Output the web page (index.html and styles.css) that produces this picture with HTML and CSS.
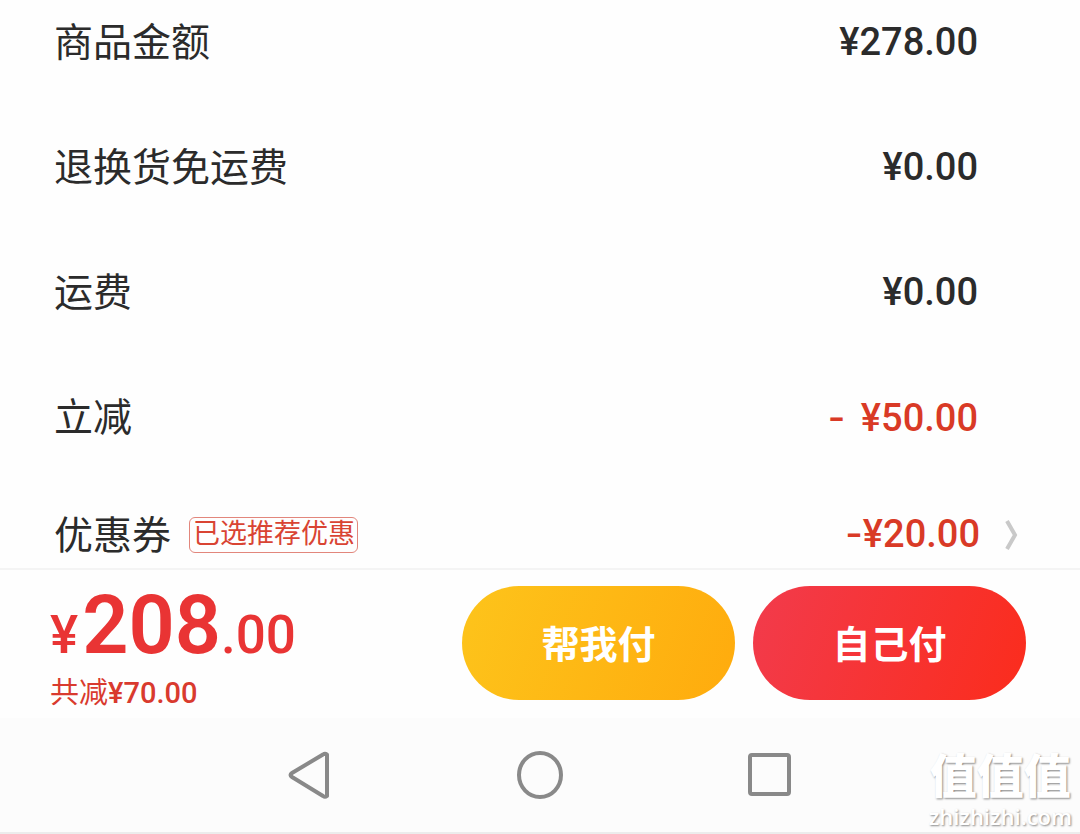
FILE: index.html
```
<!DOCTYPE html>
<html lang="zh-CN">
<head>
    <meta charset="UTF-8">
    <meta name="viewport" content="width=device-width, initial-scale=1.0">
    <title>确认订单</title>
    <link rel="stylesheet" href="styles.css">
</head>
<body>
    <main class="summary">
        <div class="row">
            <span class="label">商品金额</span>
            <span class="value">¥278.00</span>
        </div>
        <div class="row">
            <span class="label">退换货免运费</span>
            <span class="value">¥0.00</span>
        </div>
        <div class="row">
            <span class="label">运费</span>
            <span class="value">¥0.00</span>
        </div>
        <div class="row">
            <span class="label">立减</span>
            <span class="value discount"><span class="sign spaced">-</span> ¥50.00</span>
        </div>
        <a class="row coupon" href="#">
            <span class="label">优惠券</span>
            <span class="tag">已选推荐优惠</span>
            <span class="value discount"><span class="sign">-</span>¥20.00</span>
            <svg class="chevron" width="14" height="32" viewBox="0 0 14 32" aria-hidden="true">
                <path d="M3 2 L11 16 L3 30" fill="none" stroke="#c9c9c9" stroke-width="4"/>
            </svg>
        </a>
    </main>

    <footer class="pay-bar">
        <div class="total">
            <div class="price"><span class="yen">¥</span><span class="whole">208</span><span class="cents">.00</span></div>
            <div class="saved">共减<span class="saved-amount">¥70.00</span></div>
        </div>
        <div class="actions">
            <button type="button" class="pay friend">帮我付</button>
            <button type="button" class="pay self">自己付</button>
        </div>
    </footer>

    <nav class="system-nav">
        <button type="button" aria-label="返回">
            <svg width="48" height="48" viewBox="0 0 48 48">
                <path d="M41 3.5 Q39 2 37 3.5 L6 22 Q3 24 6 26 L37 45 Q39 46.5 41 45 Z"/>
            </svg>
        </button>
        <button type="button" aria-label="主页">
            <svg width="48" height="48" viewBox="0 0 48 48">
                <ellipse cx="24" cy="24" rx="21" ry="22"/>
            </svg>
        </button>
        <button type="button" aria-label="最近任务">
            <svg width="48" height="48" viewBox="0 0 48 48">
                <rect x="4" y="4" width="39" height="39" rx="2"/>
            </svg>
        </button>
        <div class="watermark">
            <div class="brand">值值值</div>
            <div class="site">zhizhizhi.com</div>
        </div>
    </nav>
</body>
</html>
```

FILE: styles.css
```
* {
    box-sizing: border-box;
}
body {
    margin: 0;
    min-height: 100vh;
    display: flex;
    flex-direction: column;
    background-color: #fefefe;
    color: #2b2b2b;
    font-family: Roboto, "Noto Sans CJK SC", sans-serif;
}
.summary {
    display: flex;
    flex-direction: column;
    padding: 14px 0 12px;
}
.row {
    display: flex;
    align-items: center;
    height: 56px;
    margin-bottom: 69px;
    padding: 0 102px 0 54px;
    color: inherit;
    text-decoration: none;
}
.coupon {
    height: 42px;
    margin-bottom: 0;
    padding-right: 62px;
}
.label {
    padding-top: 2px;
    font-size: 39px;
    line-height: 56px;
}
.value {
    margin-left: auto;
    font-size: 38px;
    font-weight: 500;
    line-height: 56px;
}
.coupon .value {
    padding-bottom: 4px;
}
.discount {
    color: #d93a26;
}
.sign {
    font-family: Inter, sans-serif;
}
.spaced {
    margin-right: 6px;
}
.tag {
    margin-left: 18px;
    padding: 0 2px 2px 3px;
    border: 1px solid #e2867c;
    border-radius: 6px;
    color: #d94433;
    font-size: 27px;
    line-height: 32px;
}
.chevron {
    margin-left: 24px;
}
.pay-bar {
    display: flex;
    justify-content: space-between;
    border-top: 2px solid #f4f4f4;
    padding: 16px 54px 6px 50px;
}
.total {
    padding-top: 1px;
}
.price {
    display: flex;
    align-items: baseline;
    color: #e93434;
    font-weight: 500;
    line-height: 78px;
}
.yen {
    margin-right: 4px;
    font-size: 53px;
}
.whole {
    font-size: 81px;
    font-weight: 600;
}
.cents {
    font-size: 53px;
}
.saved {
    color: #d93a2e;
    font-size: 29px;
    line-height: 38px;
}
.saved-amount {
    font-weight: 500;
}
.actions {
    display: flex;
    align-items: flex-start;
    gap: 18px;
}
.pay {
    width: 273px;
    height: 114px;
    padding: 0 0 4px;
    border: none;
    border-radius: 57px;
    color: #fff;
    font-family: inherit;
    font-size: 38px;
    font-weight: 700;
    cursor: pointer;
}
.friend {
    background: linear-gradient(110deg, #fdc41b, #ffab0d);
}
.self {
    background: linear-gradient(110deg, #f23b4c, #fb2c1c);
}
.system-nav {
    position: relative;
    flex: 1;
    display: flex;
    justify-content: center;
    align-items: center;
    gap: 182px;
    border-bottom: 2px solid #ececec;
    background-color: #fcfcfc;
}
.system-nav button {
    display: flex;
    padding: 0;
    border: none;
    background: none;
    cursor: pointer;
}
.system-nav svg {
    fill: none;
    stroke: #898989;
    stroke-width: 4;
    stroke-linejoin: round;
}
.watermark {
    position: absolute;
    right: 8px;
    bottom: 2px;
    color: #fff;
    text-align: center;
    text-shadow: 1px 1px 2px #888;
}
.brand {
    font-size: 47px;
    font-weight: 900;
    line-height: 50px;
}
.site {
    font-family: "Open Sans", sans-serif;
    font-size: 22px;
    font-weight: 600;
    line-height: 28px;
}
```
